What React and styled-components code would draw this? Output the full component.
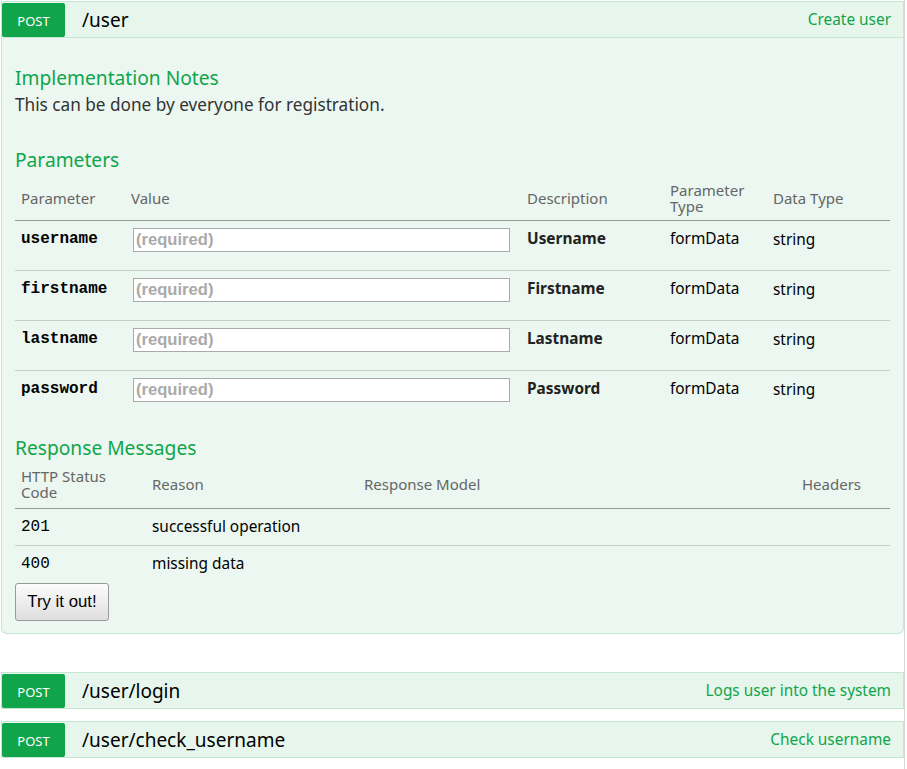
import styled, { createGlobalStyle } from 'styled-components';

const GlobalStyle = createGlobalStyle`
  body {
    margin: 0;
    background: #fff;
    font-family: "Noto Sans", "Open Sans", sans-serif;
  }
`;

const GREEN = '#10a54a';

const Page = styled.div`
  width: 905px;
  min-height: 769px;
  border-right: 1px solid #d9d9d9;
  padding: 1px 0 0 1px;
  box-sizing: border-box;
`;

const Operation = styled.div`
  width: 903px;
  margin-bottom: ${(props) => props.gap || 0}px;
`;

const Heading = styled.div`
  display: flex;
  align-items: center;
  height: 35px;
  background: #e7f6ec;
  border: 1px solid #c3e8d1;
`;

const Method = styled.span`
  display: flex;
  align-items: center;
  justify-content: center;
  width: 63px;
  height: 34px;
  padding-top: 2px;
  box-sizing: border-box;
  background: ${GREEN};
  color: #fff;
  font-size: 13px;
  border-radius: 2px;
`;

const Path = styled.span`
  margin-left: 17px;
  font-size: 19px;
  color: #000;
  flex: 1;
`;

const Summary = styled.span`
  margin-right: 12px;
  font-size: 15.4px;
  color: ${GREEN};
`;

const Content = styled.div`
  background: #ebf7f0;
  border: 1px solid #c3e8d1;
  border-top: none;
  border-radius: 0 0 6px 6px;
  padding: 26px 12px 12px 13px;
`;

const SectionTitle = styled.h4`
  margin: ${(props) => props.top || 0}px 0 0;
  font-size: 19.2px;
  font-weight: normal;
  color: ${GREEN};
  line-height: 27px;
`;

const Notes = styled.p`
  margin: 0;
  font-size: 17.2px;
  color: #333;
  line-height: 27px;
`;

const Table = styled.table`
  width: 875px;
  border-collapse: collapse;
  table-layout: fixed;
  margin-top: ${(props) => props.top || 0}px;
`;

const Th = styled.th`
  width: ${(props) => props.w - 12}px;
  text-align: left;
  font-weight: normal;
  font-size: 15px;
  line-height: 16px;
  color: #666;
  padding: 6px;
  height: ${(props) => props.h || 32}px;
  vertical-align: middle;
  border-bottom: 1px solid #999;
`;

const Tr = styled.tr`
  border-bottom: ${(props) => (props.last ? 'none' : '1px solid #ccc')};
`;

const Td = styled.td`
  padding: ${(props) => props.pt || 7}px 6px 0 6px;
  height: ${(props) => props.h}px;
  vertical-align: top;
  font-size: 15.4px;
  line-height: 18px;
  color: #000;
  box-sizing: border-box;
`;

const Code = styled.code`
  font-family: "Liberation Mono", "DejaVu Sans Mono", monospace;
  font-size: 16px;
  font-weight: ${(props) => (props.bold ? 'bold' : 'normal')};
  color: #000;
`;

const Strong = styled.strong`
  font-weight: bold;
  color: #222;
`;

const Input = styled.input`
  display: block;
  width: 377px;
  height: 24px;
  margin: 0 0 0 2px;
  padding: 0 2px;
  box-sizing: border-box;
  border: 1px solid #aaa;
  background: #fff;
  font-family: "Liberation Sans", Arial, sans-serif;
  font-size: 16.6px;
  font-weight: bold;
  &::placeholder {
    color: #aaa;
    font-weight: bold;
  }
`;

const TryButton = styled.button`
  display: block;
  margin-top: 2px;
  width: 94px;
  height: 38px;
  font-family: "Liberation Sans", Arial, sans-serif;
  font-size: 16.8px;
  color: #000;
  background: linear-gradient(#fcfcfc, #dedede);
  border: 1px solid #9a9a9a;
  border-radius: 3px;
`;

const params = [
  { name: 'username', desc: 'Username' },
  { name: 'firstname', desc: 'Firstname' },
  { name: 'lastname', desc: 'Lastname' },
  { name: 'password', desc: 'Password' },
];

const responses = [
  { code: '201', reason: 'successful operation', h: 37 },
  { code: '400', reason: 'missing data', h: 36 },
];

function OpHeading({ path, summary }) {
  return (
    <Heading>
      <Method>POST</Method>
      <Path>{path}</Path>
      <Summary>{summary}</Summary>
    </Heading>
  );
}

function App() {
  return (
    <Page>
      <GlobalStyle />
      <Operation gap={38}>
        <OpHeading path="/user" summary="Create user" />
        <Content>
          <SectionTitle>Implementation Notes</SectionTitle>
          <Notes>This can be done by everyone for registration.</Notes>
          <SectionTitle top={28}>Parameters</SectionTitle>
          <Table top={3}>
            <thead>
              <tr>
                <Th w={110}>Parameter</Th>
                <Th w={396}>Value</Th>
                <Th w={143}>Description</Th>
                <Th w={103}>
                  Parameter
                  <br />
                  Type
                </Th>
                <Th w={123}>Data Type</Th>
              </tr>
            </thead>
            <tbody>
              {params.map((p, i) => (
                <Tr key={p.name} last={i === params.length - 1}>
                  <Td h={50} pt={8}>
                    <Code bold>{p.name}</Code>
                  </Td>
                  <Td h={50}>
                    <Input placeholder="(required)" />
                  </Td>
                  <Td h={50} pt={9}>
                    <Strong>{p.desc}</Strong>
                  </Td>
                  <Td h={50} pt={9}>formData</Td>
                  <Td h={50} pt={10}>string</Td>
                </Tr>
              ))}
            </tbody>
          </Table>
          <SectionTitle top={13}>Response Messages</SectionTitle>
          <Table>
            <thead>
              <tr>
                <Th w={131} h={35}>
                  HTTP Status
                  <br />
                  Code
                </Th>
                <Th w={212} h={35}>Reason</Th>
                <Th w={438} h={35}>Response Model</Th>
                <Th w={94} h={35}>Headers</Th>
              </tr>
            </thead>
            <tbody>
              {responses.map((r, i) => (
                <Tr key={r.code} last={i === responses.length - 1}>
                  <Td h={r.h} pt={8}>
                    <Code>{r.code}</Code>
                  </Td>
                  <Td h={r.h} pt={9}>{r.reason}</Td>
                  <Td h={r.h} />
                  <Td h={r.h} />
                </Tr>
              ))}
            </tbody>
          </Table>
          <TryButton>Try it out!</TryButton>
        </Content>
      </Operation>
      <Operation gap={12}>
        <OpHeading path="/user/login" summary="Logs user into the system" />
      </Operation>
      <Operation>
        <OpHeading path="/user/check_username" summary="Check username" />
      </Operation>
    </Page>
  );
}

export default App;
